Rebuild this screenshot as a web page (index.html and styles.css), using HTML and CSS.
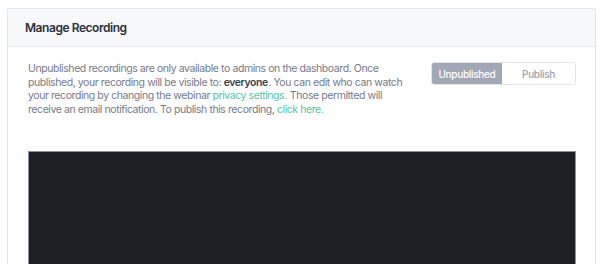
FILE: index.html
```html
<!DOCTYPE html>
<html>
<head>
<meta charset="utf-8">
<link rel="stylesheet" href="styles.css">
</head>
<body>
<section class="card">
  <header class="card-header">
    <h2 class="card-title">Manage Recording</h2>
  </header>
  <div class="card-body">
    <div class="intro">
      <p class="desc">Unpublished recordings are only available to admins on the dashboard. Once published, your recording will be visible to: <strong>everyone</strong>. You can edit who can watch your recording by changing the webinar <a href="#" class="link">privacy settings.</a> Those permitted will receive an email notification. To publish this recording, <a href="#" class="link">click here.</a></p>
      <div class="toggle">
        <button class="seg active">Unpublished</button>
        <button class="seg">Publish</button>
      </div>
    </div>
    <div class="player"></div>
  </div>
</section>
</body>
</html>
```

FILE: styles.css
```css
* { box-sizing: border-box; }
html, body { margin: 0; padding: 0; background: #ffffff; }
body {
  padding: 8px 4px 0 7px;
  font-family: Inter, "Noto Sans", sans-serif;
  overflow: hidden;
  height: 264px;
}
.card {
  border: 1px solid #e4e6ea;
  border-radius: 2px;
  background: #fff;
  height: 400px;
}
.card-header {
  background: #f7f8fa;
  border-bottom: 1px solid #e8eaee;
  height: 38px;
  display: flex;
  align-items: center;
  padding: 0 17px;
}
.card-title {
  margin: 0;
  font-size: 12px;
  font-weight: 600;
  color: #2b2f3e;
  letter-spacing: -0.45px;
}
.card-body {
  padding: 15px 19px 0 20px;
}
.intro {
  display: flex;
  justify-content: space-between;
  align-items: flex-start;
}
.desc {
  margin: 0;
  width: 382px;
  font-size: 10.5px;
  line-height: 13.7px;
  color: #767b89;
  letter-spacing: -0.42px;
}
.desc strong { color: #3b3f4c; font-weight: 600; padding-right: 0.5px; }
.link { color: #55c6a6; text-decoration: none; padding-right: 0.5px; }
.toggle {
  display: flex;
  border: 1px solid #e3e5ea;
  border-radius: 3px;
  overflow: hidden;
  height: 23px;
}
.seg {
  border: 0;
  margin: 0;
  font-family: inherit;
  font-size: 10px;
  font-weight: 500;
  letter-spacing: -0.3px;
  color: #9ca1ad;
  background: #fff;
  padding: 0;
  width: 73px;
  height: 100%;
}
.seg.active {
  width: 70px;
  background: #a1a7b5;
  color: #fff;
}
.player {
  margin-top: 34px;
  height: 200px;
  background: #1c1f26;
  border: 1px solid #8e939c;
  border-bottom: 0;
}
```
